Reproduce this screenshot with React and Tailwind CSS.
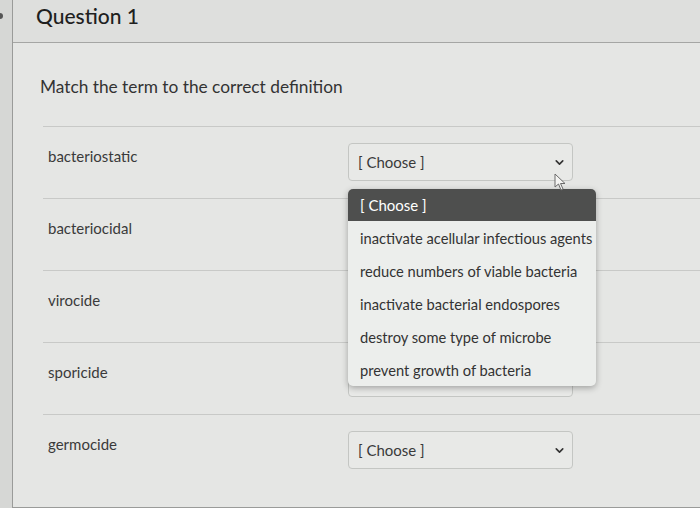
import { ChevronDown } from 'lucide-react'

const TERMS = ['bacteriostatic', 'bacteriocidal', 'virocide', 'sporicide', 'germocide']

const OPTIONS = [
  'inactivate acellular infectious agents',
  'reduce numbers of viable bacteria',
  'inactivate bacterial endospores',
  'destroy some type of microbe',
  'prevent growth of bacteria',
]

function Select({ open, covered }) {
  return (
    <div className="relative">
      <div className="flex h-[38px] w-[225px] items-center justify-between rounded-[4px] border border-[#c4c6c3] bg-[#e8e9e7] pl-[9px] pr-[6px]">
        <span className={`text-[15px] text-[#3a3a3a] ${covered ? 'invisible' : ''}`}>[ Choose ]</span>
        <ChevronDown size={13} strokeWidth={3} className="text-[#333]" />
      </div>
      {open && (
        <>
          <svg className="absolute left-[206px] top-[30px] z-20" width="14" height="18" viewBox="0 0 14 18">
            <path d="M1 1 L1 14 L4.5 11 L7 17 L9 16 L6.5 10.5 L11 10.5 Z" fill="#f4f4f2" stroke="#6a6a6a" strokeWidth="1" />
          </svg>
          <div className="absolute left-0 top-[46px] z-10 w-[248px] overflow-hidden rounded-[5px] bg-[#eceeec] shadow-[0_2px_6px_rgba(0,0,0,0.3)]">
            <div className="flex h-[32px] items-center bg-[#4e4f4e] px-[12px] text-[15px] text-white">[ Choose ]</div>
            {OPTIONS.map((opt) => (
              <div key={opt} className="flex h-[33px] items-center whitespace-nowrap px-[12px] text-[14.7px] text-[#333]">
                {opt}
              </div>
            ))}
          </div>
        </>
      )}
    </div>
  )
}

export default function App() {
  return (
    <div className="flex h-[508px] w-[700px] overflow-hidden bg-[#d9dad8] font-['Lato','Open_Sans',sans-serif]">
      <div className="relative w-[12px] shrink-0 bg-[#d6d7d5]">
        <div className="absolute left-[-3px] top-[13px] h-[6px] w-[6px] rounded-full bg-[#555]" />
      </div>
      <div className="flex min-w-0 flex-1 flex-col border-l border-[#9a9b99] bg-[#e5e6e4]">
        <div className="flex h-[43px] shrink-0 items-start border-b border-[#a5a6a4] bg-[#dedfdd] px-[23px]">
          <h2 className="text-[21px] font-medium text-[#1f1f1f]">Question 1</h2>
        </div>
        <div className="flex flex-1 flex-col pt-[31px]">
          <p className="pl-[27px] text-[17.3px] text-[#333]">Match the term to the correct definition</p>
          <div className="ml-[30px] mt-[26px] flex flex-col">
            {TERMS.map((term, i) => (
              <div key={term} className="flex h-[72px] items-center border-t border-[#c8c9c7] pl-[5px]">
                <div className="-mt-[12px] w-[300px] text-[15px] text-[#3a3a3a]">{term}</div>
                <Select open={i === 0} covered={i > 0 && i < 4} />
              </div>
            ))}
          </div>
          <div className="mt-auto h-[3px] border-b border-[#9a9b99]" />
        </div>
      </div>
    </div>
  )
}
